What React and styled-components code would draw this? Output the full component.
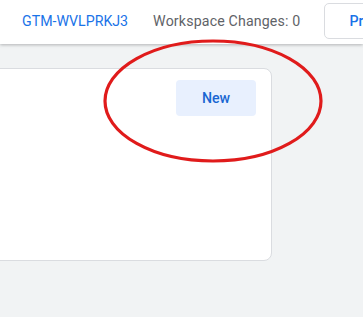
import { styled, createGlobalStyle } from "styled-components";

const GlobalStyle = createGlobalStyle`
  html, body {
    margin: 0;
    padding: 0;
    background: #f1f3f4;
    font-family: Roboto, "Liberation Sans", Arial, sans-serif;
  }
  #root {
    position: relative;
    min-height: 317px;
    overflow: hidden;
  }
`;

const App = () => {
  return (
    <>
      <GlobalStyle />
      <Page>
        <Header>
          <ContainerId>GTM-WVLPRKJ3</ContainerId>
          <Changes>Workspace Changes: 0</Changes>
          <OutlineButton>Preview</OutlineButton>
        </Header>
        <Main>
          <Card>
            <CardTop>
              <NewButton>New</NewButton>
            </CardTop>
          </Card>
        </Main>
        <Annotation width="363" height="317" viewBox="0 0 363 317">
          <ellipse
            cx="213"
            cy="101"
            rx="108"
            ry="60"
            fill="none"
            stroke="#e01b1b"
            strokeWidth="3.2"
          />
        </Annotation>
      </Page>
    </>
  );
};

const Page = styled.div`
  position: relative;
  width: 363px;
  height: 317px;
  overflow: hidden;
`;

const Header = styled.header`
  height: 44px;
  background: #fff;
  display: flex;
  align-items: center;
  padding-left: 22px;
  box-shadow: 0 1px 3px rgba(60, 64, 67, 0.35);
  position: relative;
  white-space: nowrap;
`;

const ContainerId = styled.span`
  color: #1a73e8;
  font-size: 14.2px;
  margin-right: 25px;
  margin-top: -3px;
`;

const Changes = styled.span`
  color: #5f6368;
  font-size: 14.2px;
  letter-spacing: 0.15px;
  margin-right: 24px;
  margin-top: -3px;
`;

const OutlineButton = styled.button`
  flex-shrink: 0;
  height: 36px;
  margin-top: -3px;
  padding: 0 24px;
  border: 1px solid #dadce0;
  border-radius: 5px;
  background: #fff;
  color: #1a73e8;
  font-family: inherit;
  font-size: 14.2px;
  font-weight: 500;
`;

const Main = styled.main`
  display: flex;
  justify-content: flex-end;
  padding: 24px 91px 0 0;
`;

const Card = styled.section`
  flex-shrink: 0;
  width: 320px;
  height: 193px;
  box-sizing: border-box;
  background: #fff;
  border: 1px solid #dadce0;
  border-radius: 8px;
  padding: 11px 15px;
`;

const CardTop = styled.div`
  display: flex;
  justify-content: flex-end;
`;

const NewButton = styled.button`
  width: 80px;
  height: 36px;
  border: none;
  border-radius: 4px;
  background: #e8f0fe;
  color: #1967d2;
  font-family: inherit;
  font-size: 14.2px;
  font-weight: 500;
`;

const Annotation = styled.svg`
  position: absolute;
  left: 0;
  top: 0;
  pointer-events: none;
`;

export default App;
